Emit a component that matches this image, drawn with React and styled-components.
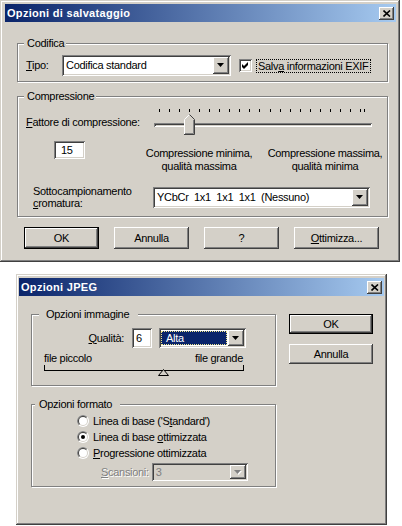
import styled, { createGlobalStyle } from "styled-components";

const FACE = "#d4d0c8";

const GlobalStyle = createGlobalStyle`
  * { box-sizing: border-box; }
  html, body { margin: 0; padding: 0; background: #fff; }
  body {
    font-family: "Liberation Sans", Arial, sans-serif;
    font-size: 11px;
    letter-spacing: -0.3px;
    color: #000;
    line-height: 13px;
  }
  u { text-underline-offset: 1px; }
`;

const bevelOut = `
  box-shadow: inset -1px -1px #404040, inset 1px 1px #fff,
    inset -2px -2px #808080, inset 2px 2px ${FACE};
`;

const bevelIn = `
  box-shadow: inset 1px 1px #808080, inset -1px -1px #fff,
    inset 2px 2px #404040, inset -2px -2px ${FACE};
`;

const Page = styled.div`
  display: flex;
  flex-direction: column;
  align-items: flex-start;
`;

const Window = styled.div`
  width: ${(p) => p.$w}px;
  height: ${(p) => p.$h}px;
  margin: ${(p) => p.$margin || 0};
  padding: ${(p) => p.$pad};
  background: ${FACE};
  box-shadow: inset -1px -1px #404040, inset 1px 1px ${FACE},
    inset -2px -2px #808080, inset 2px 2px #fff;
`;

const TitleBar = styled.div`
  height: 18px;
  display: flex;
  align-items: center;
  justify-content: space-between;
  padding: 0 2px 0 2px;
  background: linear-gradient(to right, #0a246a, #a6caf0);
`;

const TitleText = styled.span`
  color: #fff;
  font-weight: bold;
  letter-spacing: 0.3px;
`;

const CloseBtn = styled.div`
  width: 15px;
  height: 13px;
  background: ${FACE};
  display: flex;
  align-items: center;
  justify-content: center;
  ${bevelOut}
`;

const Group = styled.div`
  position: relative;
  width: ${(p) => p.$w}px;
  height: ${(p) => p.$h}px;
  margin-top: ${(p) => p.$mt || 0}px;
  border: 1px solid #808080;
  box-shadow: inset 1px 1px #fff, 1px 1px #fff;
  padding: ${(p) => p.$pad};
`;

const Caption = styled.span`
  position: absolute;
  top: -7px;
  left: ${(p) => p.$left}px;
  padding: ${(p) => p.$pad};
  background: ${FACE};
  line-height: 13px;
`;

const Row = styled.div`
  display: flex;
  align-items: ${(p) => p.$align || "center"};
  height: ${(p) => (p.$h ? `${p.$h}px` : "auto")};
  margin-top: ${(p) => p.$mt || 0}px;
  padding-left: ${(p) => p.$pl || 0}px;
`;

const Label = styled.span`
  width: ${(p) => (p.$w ? `${p.$w}px` : "auto")};
  margin-left: ${(p) => p.$ml || 0}px;
  text-align: ${(p) => p.$align || "left"};
  flex-shrink: 0;
  color: ${(p) => (p.$disabled ? "#808080" : "#000")};
  text-shadow: ${(p) => (p.$disabled ? "1px 1px #fff" : "none")};
`;

const Field = styled.div`
  width: ${(p) => p.$w}px;
  height: ${(p) => p.$h}px;
  margin-left: ${(p) => p.$ml || 0}px;
  padding: 0 0 0 ${(p) => p.$pl || 4}px;
  display: flex;
  align-items: center;
  background: #fff;
  flex-shrink: 0;
  ${bevelIn}
`;

const Select = styled.div`
  width: ${(p) => p.$w}px;
  height: ${(p) => p.$h}px;
  margin-left: ${(p) => p.$ml || 0}px;
  padding: 2px;
  display: flex;
  flex-shrink: 0;
  background: ${(p) => (p.$disabled ? FACE : "#fff")};
  ${bevelIn}
`;

const SelectValue = styled.div`
  flex: 1;
  display: flex;
  align-items: center;
  white-space: pre;
  padding-left: ${(p) => (p.$selected ? 5 : 2)}px;
  margin: ${(p) => (p.$selected ? "1px 1px 1px 0" : 0)};
  color: ${(p) => (p.$disabled ? "#808080" : p.$selected ? "#fff" : "#000")};
  background: ${(p) => (p.$selected ? "#0a246a" : "transparent")};
  outline: ${(p) => (p.$selected ? "1px dotted #f0e68c" : "none")};
  outline-offset: -1px;
`;

const DropBtn = styled.div`
  width: 16px;
  display: flex;
  align-items: center;
  justify-content: center;
  background: ${FACE};
  ${bevelOut}
`;

const Button = styled.div`
  width: ${(p) => p.$w}px;
  height: ${(p) => p.$h}px;
  display: flex;
  align-items: center;
  justify-content: center;
  background: ${FACE};
  border: ${(p) => (p.$default ? "1px solid #000" : "none")};
  ${bevelOut}
`;

const ButtonRow = styled.div`
  display: flex;
  gap: 15px;
  margin: 10px 0 0 7px;
`;

const Body1 = styled.div`
  padding: 21px 0 0 12px;
`;

const CheckLabel = styled.span`
  margin-left: 4px;
  border: 1px dotted #000;
  padding: 0 1px;
  line-height: 12px;
`;

const CheckBox = styled.div`
  width: 13px;
  height: 13px;
  margin-left: 8px;
  background: #fff;
  flex-shrink: 0;
  ${bevelIn}
`;

const Slider = styled.div`
  position: relative;
  width: 218px;
  height: 28px;
  flex-shrink: 0;
`;

const Ticks = styled.div`
  position: relative;
  height: 3px;
  margin: 1px 0 0 5px;
  width: 202px;
  background: repeating-linear-gradient(
    to right,
    #000 0 1px,
    transparent 1px 10.05px
  );
  &::after {
    content: "";
    position: absolute;
    left: 205px;
    top: 0;
    width: 1px;
    height: 3px;
    background: #000;
  }
`;

const Track = styled.div`
  height: 4px;
  margin-top: 11px;
  background: ${FACE};
  box-shadow: inset 1px 1px #808080, inset -1px -1px #fff,
    inset 2px 2px #404040;
`;

const Thumb = styled.svg`
  position: absolute;
  left: ${(p) => p.$pos}px;
  top: 6px;
`;

const Hint = styled.div`
  width: 120px;
  margin-left: ${(p) => p.$ml}px;
  margin-top: 6px;
  text-align: center;
  line-height: 13px;
  flex-shrink: 0;
`;

const TwoLine = styled.div`
  width: 120px;
  margin-left: 7px;
  line-height: 12px;
  flex-shrink: 0;
`;

const Body2 = styled.div`
  display: flex;
  align-items: flex-start;
  padding: 18px 0 0 12px;
`;

const Column = styled.div`
  display: flex;
  flex-direction: column;
  gap: ${(p) => p.$gap}px;
  margin-left: ${(p) => p.$ml || 0}px;
`;

const ScaleLabels = styled.div`
  display: flex;
  justify-content: space-between;
  width: 199px;
  margin: 4px 0 0 12px;
`;

const Scale = styled.div`
  position: relative;
  width: 200px;
  height: 6px;
  margin-left: 12px;
  border: 1px solid #000;
  border-top: none;
`;

const ScaleMark = styled.svg`
  position: absolute;
  left: ${(p) => p.$pos}px;
  top: 4px;
`;

const RadioRow = styled.div`
  display: flex;
  align-items: center;
  height: 16px;
`;

function CloseIcon() {
  return (
    <CloseBtn>
      <svg width="8" height="7" viewBox="0 0 8 7">
        <path d="M0.5 0.5 L7 6.5 M7 0.5 L0.5 6.5" stroke="#000" strokeWidth="1.6" />
      </svg>
    </CloseBtn>
  );
}

function Arrow({ disabled }) {
  return (
    <svg width="8" height="5" viewBox="0 0 8 5">
      {disabled && <polygon points="1,1 8,1 4.5,5" fill="#fff" />}
      <polygon points="0,0 7,0 3.5,4" fill={disabled ? "#808080" : "#000"} />
    </svg>
  );
}

function Combo({ w, h, ml, value, selected, disabled }) {
  return (
    <Select $w={w} $h={h} $ml={ml} $disabled={disabled}>
      <SelectValue $selected={selected} $disabled={disabled}>
        {value}
      </SelectValue>
      <DropBtn>
        <Arrow disabled={disabled} />
      </DropBtn>
    </Select>
  );
}

function Check() {
  return (
    <CheckBox>
      <svg width="13" height="13" viewBox="0 0 13 13">
        <polygon points="3,5 5,7 9,3 9,6 5,10 3,8" fill="#000" />
      </svg>
    </CheckBox>
  );
}

const half = (r) => {
  const d = r * 0.7071;
  return `M${6 + d} ${6 - d} A${r} ${r} 0 0 0 ${6 - d} ${6 + d} Z`;
};

function Radio({ checked }) {
  return (
    <svg width="12" height="12" viewBox="0 0 12 12">
      <circle cx="6" cy="6" r="6" fill="#fff" />
      <path d={half(6)} fill="#808080" />
      <circle cx="6" cy="6" r="5" fill={FACE} />
      <path d={half(5)} fill="#404040" />
      <circle cx="6" cy="6" r="4" fill="#fff" />
      {checked && <circle cx="6" cy="6" r="2" fill="#000" />}
    </svg>
  );
}

function SliderThumb({ pos }) {
  return (
    <Thumb $pos={pos} width="11" height="21" viewBox="0 0 11 21">
      <polygon points="0.5,5.5 5.5,0.5 10.5,5.5 10.5,20.5 0.5,20.5" fill={FACE} />
      <polyline points="0.5,20 0.5,5.5 5.5,0.5" fill="none" stroke="#fff" />
      <polyline points="5.5,0.5 10.5,5.5 10.5,20.5 0,20.5" fill="none" stroke="#404040" />
      <polyline points="9.5,6 9.5,19.5 1,19.5" fill="none" stroke="#808080" />
    </Thumb>
  );
}

function SaveDialog() {
  return (
    <Window $w={400} $h={262} $pad="4px 4px 0 5px">
      <TitleBar>
        <TitleText>Opzioni di salvataggio</TitleText>
        <CloseIcon />
      </TitleBar>
      <Body1>
        <Group $w={371} $h={39} $pad="11px 0 0 8px">
          <Caption $left={6} $pad="0 2px 0 3px">Codifica</Caption>
          <Row $h={21}>
            <Label $w={36}>
              <u>T</u>ipo:
            </Label>
            <Combo w={169} h={21} value="Codifica standard" />
            <Check />
            <CheckLabel>
              Salv<u>a</u> informazioni EXIF
            </CheckLabel>
          </Row>
        </Group>
        <Group $w={371} $h={121} $mt={14} $pad="11px 0 0 8px">
          <Caption $left={6} $pad="0 2px 0 3px">Compressione</Caption>
          <Row $h={28}>
            <Label $w={128}>
              <u>F</u>attore di compressione:
            </Label>
            <Slider>
              <Ticks />
              <Track />
              <SliderThumb pos={30} />
            </Slider>
          </Row>
          <Row $align="flex-start" $mt={5}>
            <Field $w={31} $h={18} $ml={28} $pl={7}>15</Field>
            <Hint $ml={54}>
              Compressione minima,
              <br />
              qualità massima
            </Hint>
            <Hint $ml={6}>
              Compressione massima,
              <br />
              qualità minima
            </Hint>
          </Row>
          <Row $mt={12}>
            <TwoLine>
              Sottocampionamento
              <br />
              <u>c</u>romatura:
            </TwoLine>
            <Combo w={217} h={21} value="YCbCr  1x1  1x1  1x1  (Nessuno)" />
          </Row>
        </Group>
        <ButtonRow>
          <Button $w={75} $h={22} $default>
            OK
          </Button>
          <Button $w={75} $h={22}>Annulla</Button>
          <Button $w={75} $h={22}>?</Button>
          <Button $w={85} $h={22}>
            <span>
              <u>O</u>ttimizza...
            </span>
          </Button>
        </ButtonRow>
      </Body1>
    </Window>
  );
}

function JpegDialog() {
  return (
    <Window $w={371} $h={251} $margin="12px 0 0 16px" $pad="4px 3px 0 3px">
      <TitleBar>
        <TitleText>Opzioni JPEG</TitleText>
        <CloseIcon />
      </TitleBar>
      <Body2>
        <Column $gap={18}>
          <Group $w={245} $h={72} $pad="13px 0 0 0">
            <Caption $left={7} $pad="0 9px 0 7px">Opzioni immagine</Caption>
            <Row $h={20}>
              <Label $w={92} $align="right">
                <u>Q</u>ualità:
              </Label>
              <Field $w={20} $h={20} $ml={8} $pl={4}>6</Field>
              <Combo w={87} h={20} ml={7} value="Alta" selected />
            </Row>
            <ScaleLabels>
              <span>file piccolo</span>
              <span>file grande</span>
            </ScaleLabels>
            <Scale>
              <ScaleMark $pos={113} width="11" height="7" viewBox="0 0 11 7">
                <polygon points="5.5,0.5 10.5,6.5 0.5,6.5" fill={FACE} stroke="#000" />
              </ScaleMark>
            </Scale>
          </Group>
          <Group $w={245} $h={83} $pad="8px 0 0 45px">
            <Caption $left={3} $pad="0 8px 0 4px">Opzioni formato</Caption>
            <RadioRow>
              <Radio />
              <Label $ml={4}>
                Linea di base ('S<u>t</u>andard')
              </Label>
            </RadioRow>
            <RadioRow>
              <Radio checked />
              <Label $ml={4}>
                Linea di base <u>o</u>ttimizzata
              </Label>
            </RadioRow>
            <RadioRow>
              <Radio />
              <Label $ml={4}>
                <u>P</u>rogressione ottimizzata
              </Label>
            </RadioRow>
            <Row $h={18} $mt={2} $pl={24}>
              <Label $disabled>
                <u>S</u>cansioni:
              </Label>
              <Combo w={96} h={18} ml={3} value="3" disabled />
            </Row>
          </Group>
        </Column>
        <Column $gap={10} $ml={13}>
          <Button $w={84} $h={20} $default>
            OK
          </Button>
          <Button $w={84} $h={20}>Annulla</Button>
        </Column>
      </Body2>
    </Window>
  );
}

export default function App() {
  return (
    <Page>
      <GlobalStyle />
      <SaveDialog />
      <JpegDialog />
    </Page>
  );
}
